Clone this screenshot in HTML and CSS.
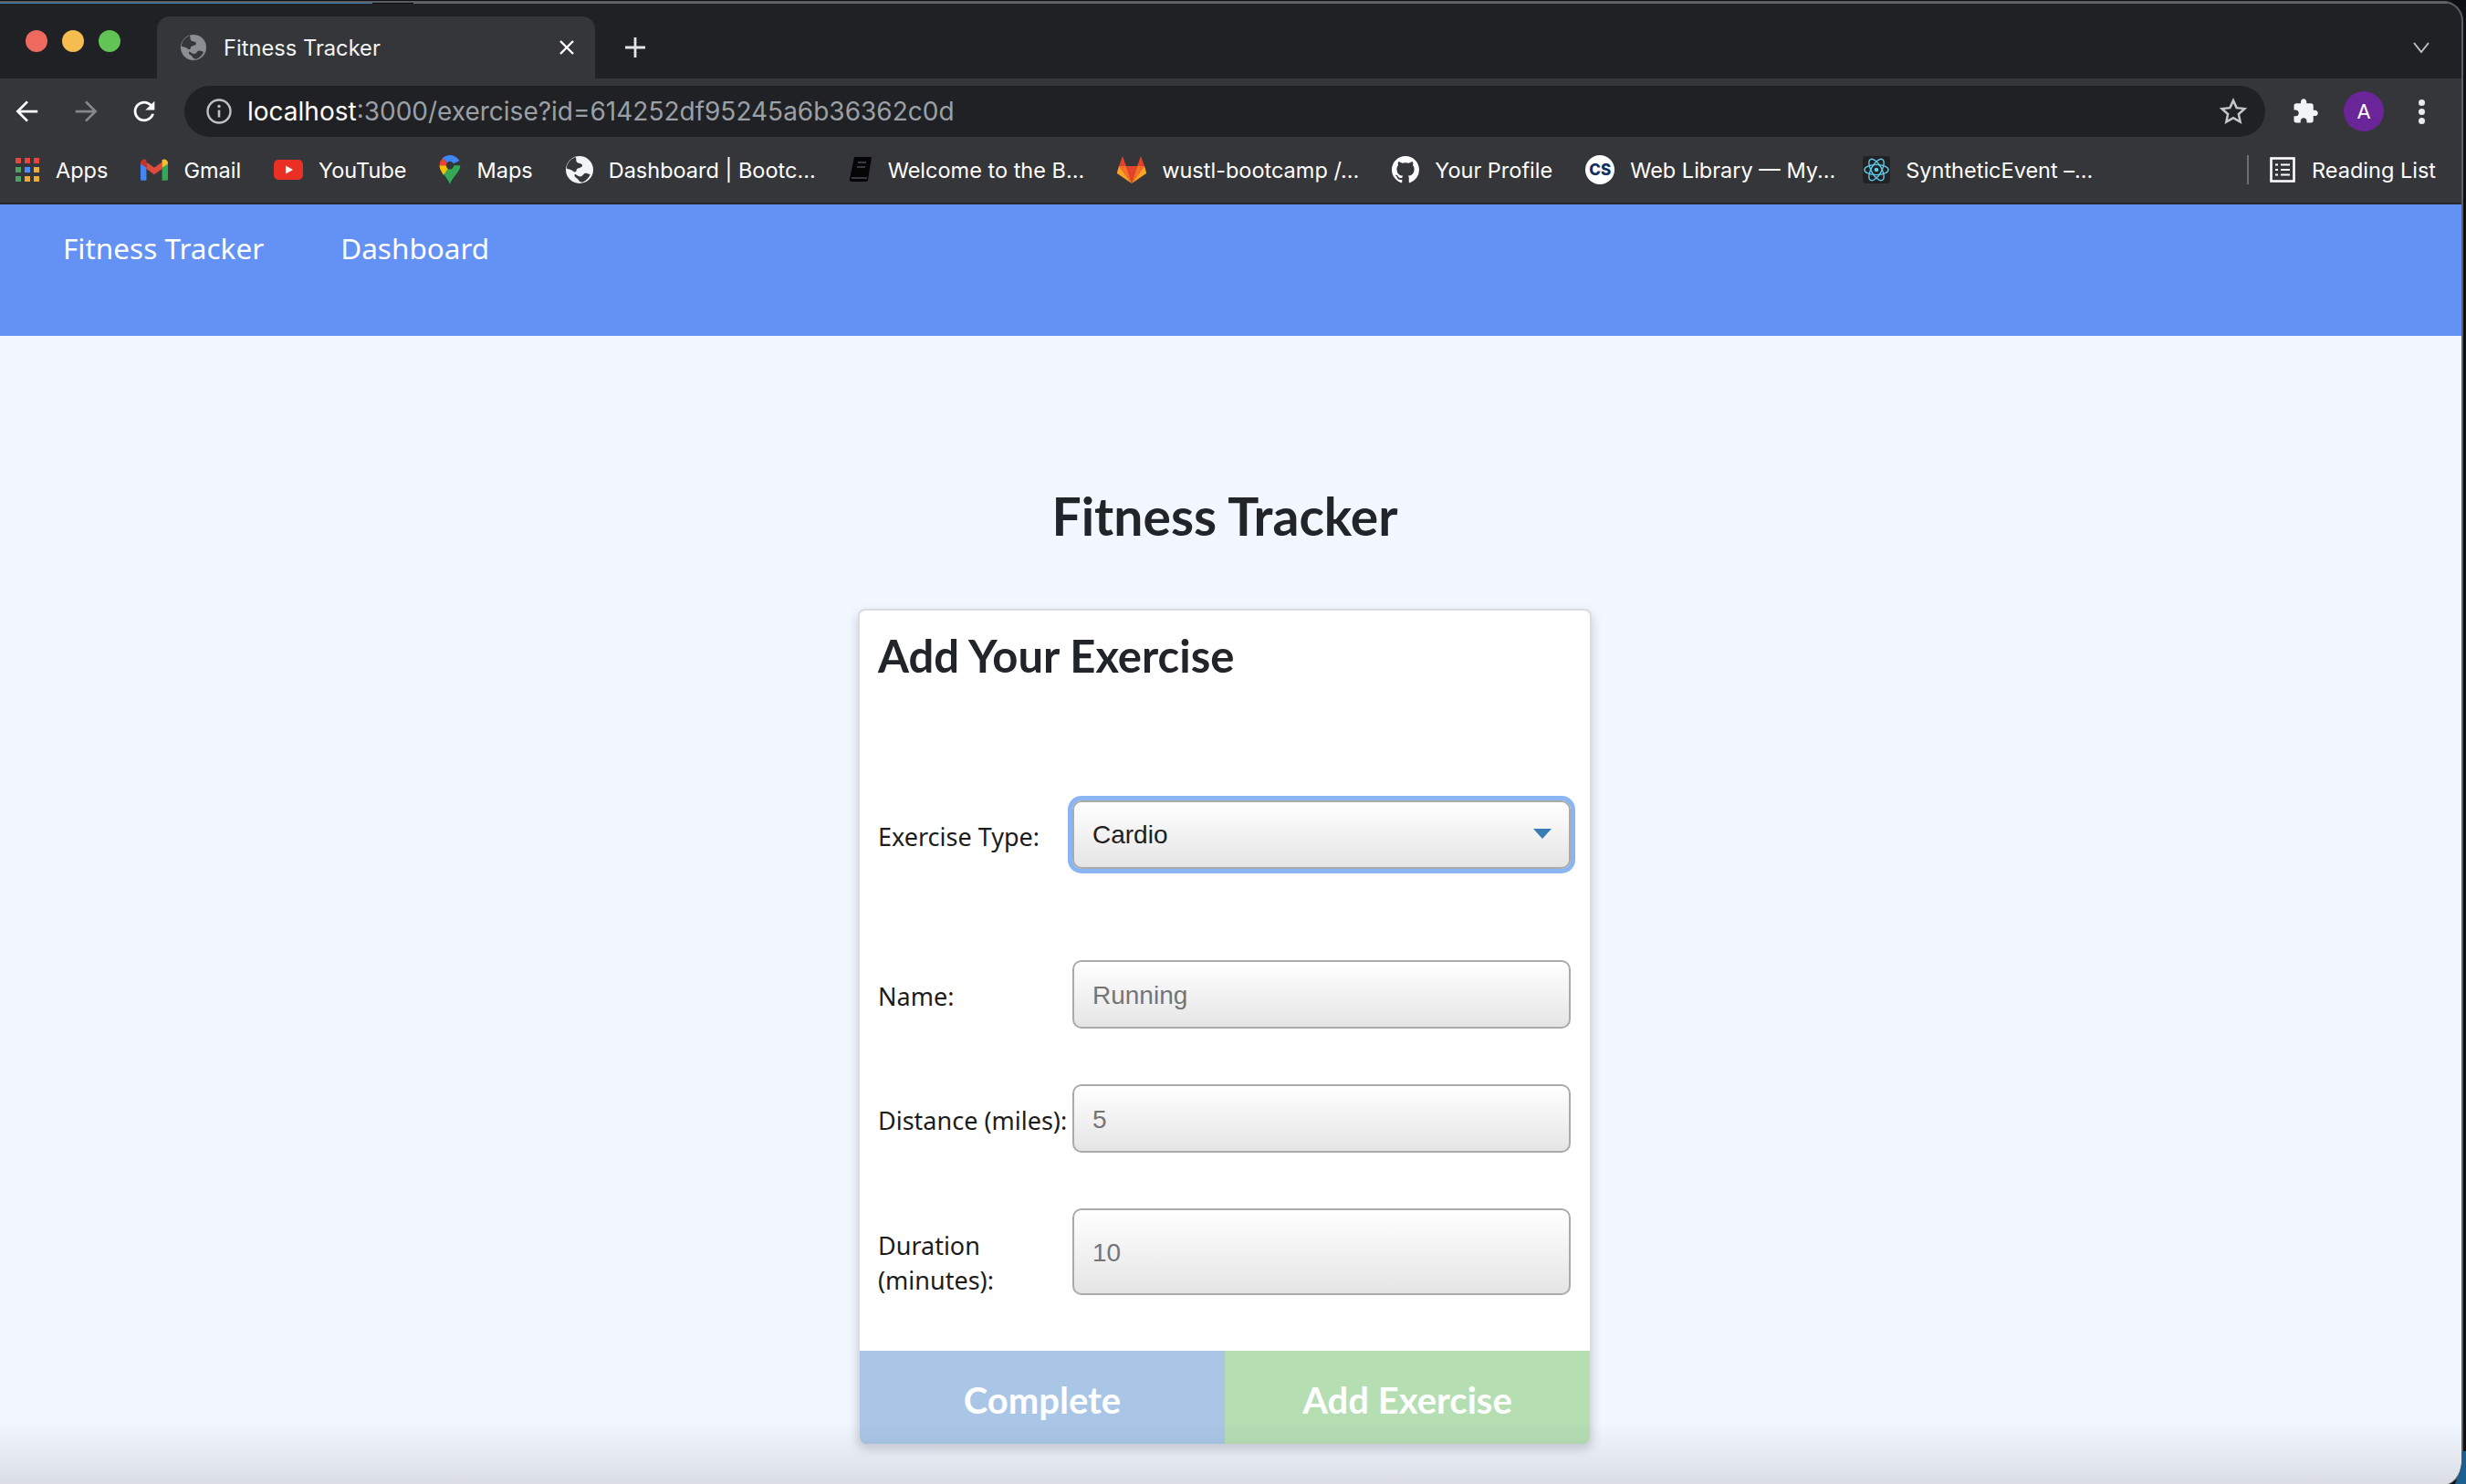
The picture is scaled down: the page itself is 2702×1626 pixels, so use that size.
FILE: index.html
```html
<!DOCTYPE html>
<html lang="en">
<head>
  <meta charset="UTF-8" />
  <title>Fitness Tracker</title>
  <link rel="stylesheet" href="styles.css">
</head>
<body>
  <svg class="defs" width="0" height="0">
    <symbol id="globe" viewBox="0 0 28 28">
      <circle cx="14" cy="14" r="14" fill="currentColor"/>
      <path fill="var(--land)" d="M9 1.500C4 3.500 1 8 .8 12.500c2.500 1.200 5 1 6.600 2.800 1.500 1.700 3.500 1 3.500-1 0-2.300 4-1.800 5.600-3.600 1.300-1.500-.5-3-2.500-3.200-2.500-.3-3.500-1.700-3.500-3.500 0-1 .6-1.800-1.500-3.500z"/>
      <path fill="var(--land)" d="M9 18.500c2 .3 3.500 2.500 5.500 2.500 3 0 3.500-3.500 5.500-3.500 1.500 0 3.200.5 5 1.500-1.500 3.500-4 6-7.500 7.500-2 .5-3.500-.2-4.500-2-1-2-3.500-2.500-4-4 0-.8-.2-2 0-2z"/>
    </symbol>
  </svg>

  <div class="title-edge"></div>
  <header class="browser">
    <div class="tabstrip">
      <div class="lights">
        <span class="light red"></span>
        <span class="light yellow"></span>
        <span class="light green"></span>
      </div>
      <div class="tab">
        <svg class="tab-globe"><use href="#globe"/></svg>
        <span class="tab-title">Fitness Tracker</span>
        <svg class="tab-close" viewBox="0 0 18 18"><path d="M2 2l14 14M16 2L2 16" stroke="#fff" stroke-width="2.400"/></svg>
      </div>
      <svg class="tab-new" viewBox="0 0 24 24"><path d="M12 1v22M1 12h22" stroke="#e3e4e6" stroke-width="2.800"/></svg>
      <svg class="tab-list" viewBox="0 0 18 18"><path d="M1 4l8 10 8-10" fill="none" stroke="#bdc1c6" stroke-width="2"/></svg>
    </div>

    <div class="toolbar">
      <svg class="tool back" viewBox="0 0 24 24"><path d="M21 12H4M12 3.500L3.500 12l8.500 8.500" fill="none" stroke="#fff" stroke-width="2.200"/></svg>
      <svg class="tool forward" viewBox="0 0 24 24"><path d="M3 12h17M12 3.500l8.500 8.500-8.500 8.500" fill="none" stroke="#85878a" stroke-width="2.200"/></svg>
      <svg class="tool reload" viewBox="0 0 24 24"><path fill="#fff" d="M17.650 6.350C16.200 4.900 14.210 4 12 4c-4.420 0-7.990 3.580-7.990 8s3.570 8 7.990 8c3.730 0 6.840-2.550 7.730-6h-2.080c-.820 2.330-3.040 4-5.650 4-3.310 0-6-2.690-6-6s2.690-6 6-6c1.660 0 3.140.690 4.220 1.780L13 11h7V4l-2.350 2.350z"/></svg>
      <div class="urlbar">
        <svg class="url-info" viewBox="0 0 28 28"><circle cx="14" cy="14" r="12.500" fill="none" stroke="#bdc1c6" stroke-width="2.400"/><path d="M14 12.500v8" stroke="#bdc1c6" stroke-width="2.600"/><circle cx="14" cy="8.500" r="1.700" fill="#bdc1c6"/></svg>
        <span class="url-host">localhost</span><span class="url-rest">:3000/exercise?id=614252df95245a6b36362c0d</span>
        <svg class="url-star" viewBox="0 0 24 24"><path d="M12 2.500l2.900 6.400 7 .8-5.200 4.700 1.400 6.900-6.100-3.500-6.100 3.500 1.400-6.900-5.200-4.700 7-.8z" fill="none" stroke="#c4c7ca" stroke-width="2"/></svg>
      </div>
      <svg class="tool puzzle" viewBox="0 0 24 24"><path fill="#f1f3f4" d="M20.500 11H19V7c0-1.100-.9-2-2-2h-4V3.500C13 2.120 11.880 1 10.500 1S8 2.120 8 3.500V5H4c-1.100 0-1.990.9-1.990 2v3.800H3.500c1.490 0 2.700 1.210 2.700 2.700s-1.210 2.700-2.700 2.700H2V20c0 1.100.9 2 2 2h3.800v-1.500c0-1.490 1.210-2.700 2.700-2.700 1.490 0 2.700 1.210 2.700 2.700V22H17c1.100 0 2-.9 2-2v-4h1.500c1.380 0 2.500-1.120 2.500-2.500S21.880 11 20.500 11z"/></svg>
      <span class="avatar">A</span>
      <span class="dots"><i></i><i></i><i></i></span>
    </div>

    <nav class="bookmarks">
      <a class="mark">
        <svg class="mark-icon apps" viewBox="0 0 28 28">
          <rect x="1" y="1" width="6" height="6" fill="#e8453c"/><rect x="11" y="1" width="6" height="6" fill="#e8453c"/><rect x="21" y="1" width="6" height="6" fill="#e8453c"/>
          <rect x="1" y="11" width="6" height="6" fill="#4ea261"/><rect x="11" y="11" width="6" height="6" fill="#4a8df6"/><rect x="21" y="11" width="6" height="6" fill="#edaa36"/>
          <rect x="1" y="21" width="6" height="6" fill="#4ea261"/><rect x="11" y="21" width="6" height="6" fill="#edaa36"/><rect x="21" y="21" width="6" height="6" fill="#edaa36"/>
        </svg>
        Apps
      </a>
      <a class="mark">
        <svg class="mark-icon" viewBox="0 0 28 22">
          <path fill="#4285f4" d="M0 3v17.500c0 .8.700 1.500 1.500 1.500H6V9z"/>
          <path fill="#34a853" d="M28 3v17.500c0 .8-.7 1.500-1.500 1.500H22V9z"/>
          <path fill="#e04b3c" d="M6 3l8 6 8-6v7l-8 6-8-6z"/>
          <path fill="#c5342a" d="M0 4c0-3 3.500-5 6-3v8L0 5z"/>
          <path fill="#f6bf2d" d="M28 4c0-3-3.500-5-6-3v8l6-4z"/>
        </svg>
        Gmail
      </a>
      <a class="mark">
        <svg class="mark-icon yt" viewBox="0 0 32 22"><rect width="32" height="22" rx="5" fill="#ea2f24"/><path d="M13 6.500l8 4.500-8 4.500z" fill="#fff"/></svg>
        YouTube
      </a>
      <a class="mark">
        <svg class="mark-icon pin" viewBox="0 0 22 31">
          <path fill="#34a853" d="M11 31C9 24 0 18 0 11h22c0 7-9 13-11 20z"/>
          <path fill="#fbbc04" d="M1.500 16.500C.5 15 0 13 0 11h7.500c0 1.500.8 2.700 1.500 3.300L4 21z"/>
          <path fill="#ea4335" d="M0 11c0-3 1-5.500 3-7.500L8.500 8c-.7.800-1 1.800-1 3z"/>
          <path fill="#4285f4" d="M3 3.500C5 1.300 8 0 11 0c4 0 8 2.300 10 6l-6.500 3c-.7-1.500-2-2.500-3.500-2.500-1 0-1.900.6-2.500 1.500z"/>
          <circle cx="11" cy="11" r="4" fill="#35363a"/>
        </svg>
        Maps
      </a>
      <a class="mark">
        <svg class="mark-icon globe"><use href="#globe"/></svg>
        Dashboard | Bootc...
      </a>
      <a class="mark">
        <svg class="mark-icon book" viewBox="0 0 26 30"><path fill="#050505" d="M6 1h19l-4 25c-.2 1-.8 2-2 2H3c-1.500 0-2.500-1-2-3z"/><path stroke="#3a3b3f" stroke-width="2" d="M10 7h9M9 12h9M3 24h17"/></svg>
        Welcome to the B...
      </a>
      <a class="mark">
        <svg class="mark-icon lab" viewBox="0 0 32 32">
          <path fill="#e24329" d="M16 31L10 12h12z"/>
          <path fill="#fc6d26" d="M16 31L10 12H2z"/>
          <path fill="#fc6d26" d="M16 31l6-19h8z"/>
          <path fill="#fca326" d="M2 12L0 19c-.2.500 0 1 .4 1.300L16 31z"/>
          <path fill="#fca326" d="M30 12l2 7c.2.500 0 1-.4 1.300L16 31z"/>
          <path fill="#e24329" d="M2 12L6 1l4 11zM30 12L26 1l-4 11z"/>
        </svg>
        wustl-bootcamp /...
      </a>
      <a class="mark">
        <svg class="mark-icon" viewBox="0 0 16 16"><path fill="#fff" d="M8 0C3.580 0 0 3.580 0 8c0 3.540 2.290 6.530 5.470 7.590.4.070.550-.170.550-.380 0-.190-.010-.820-.010-1.490-2.010.370-2.530-.490-2.690-.940-.090-.230-.480-.940-.820-1.130-.280-.150-.680-.520-.010-.530.630-.010 1.080.580 1.230.820.720 1.210 1.870.870 2.330.660.070-.520.280-.870.510-1.070-1.780-.200-3.640-.890-3.640-3.950 0-.870.310-1.590.820-2.150-.080-.200-.360-1.020.080-2.120 0 0 .670-.210 2.200.820.640-.180 1.320-.270 2-.270.680 0 1.360.090 2 .270 1.530-1.040 2.200-.820 2.200-.820.440 1.100.160 1.920.080 2.120.510.560.820 1.270.820 2.150 0 3.070-1.870 3.750-3.650 3.950.290.250.540.730.540 1.480 0 1.070-.010 1.930-.010 2.200 0 .210.150.460.550.380A8.013 8.013 0 0016 8c0-4.420-3.580-8-8-8z"/></svg>
        Your Profile
      </a>
      <a class="mark mark-narrow">
        <span class="mark-icon cs">CS</span>
        Web Library — My...
      </a>
      <a class="mark">
        <svg class="mark-icon" viewBox="0 0 32 32">
          <rect width="32" height="32" rx="4" fill="#202226"/>
          <g fill="none" stroke="#61c8e6" stroke-width="1.500">
            <ellipse cx="16" cy="16" rx="14" ry="6"/>
            <ellipse cx="16" cy="16" rx="14" ry="6" transform="rotate(60 16 16)"/>
            <ellipse cx="16" cy="16" rx="14" ry="6" transform="rotate(120 16 16)"/>
          </g>
          <circle cx="16" cy="16" r="2.500" fill="#61c8e6"/>
        </svg>
        SyntheticEvent –...
      </a>
      <span class="mark-sep"></span>
      <a class="mark">
        <svg class="mark-icon list" viewBox="0 0 28 28">
          <rect x="1.500" y="1.500" width="25" height="25" fill="none" stroke="#fff" stroke-width="2.600"/>
          <path stroke="#fff" stroke-width="2.200" d="M6 8.500h3M12 8.500h10M6 14h3M12 14h10M6 19.500h3M12 19.500h10"/>
        </svg>
        Reading List
      </a>
    </nav>
  </header>

  <div class="app-nav">
    <a class="app-link">Fitness Tracker</a>
    <a class="app-link">Dashboard</a>
  </div>

  <main class="page">
    <h1 class="page-title">Fitness Tracker</h1>

    <section class="card">
      <h2 class="card-title">Add Your Exercise</h2>

      <form class="card-form">
        <div class="row row-type">
          <label class="row-label" for="type">Exercise Type:</label>
          <div class="select-wrap">
            <select id="type" class="field field-focus">
              <option>Cardio</option>
            </select>
          </div>
        </div>
        <div class="row row-name">
          <label class="row-label" for="name">Name:</label>
          <input id="name" class="field" type="text" placeholder="Running">
        </div>
        <div class="row">
          <label class="row-label" for="distance">Distance (miles):</label>
          <input id="distance" class="field" type="text" placeholder="5">
        </div>
        <div class="row row-duration">
          <label class="row-label" for="duration">Duration (minutes):</label>
          <input id="duration" class="field field-tall" type="text" placeholder="10">
        </div>
      </form>

      <div class="card-actions">
        <button class="action action-complete" type="button">Complete</button>
        <button class="action action-add" type="button">Add Exercise</button>
      </div>
    </section>
  </main>

  <div class="dock-shade"></div>
  <div class="window-edge"></div>
  <div class="desk-corner"></div>
</body>
</html>
```

FILE: styles.css
```css
* {
  box-sizing: border-box;
}

html, body {
  margin: 0;
  height: 1626px;
  overflow: hidden;
}

body {
  position: relative;
  display: flex;
  flex-direction: column;
  background-color: #f3f7ff;
  font-family: "Liberation Sans", Arial, sans-serif;
  color: #212529;
}

.defs {
  position: absolute;
}

/* browser chrome */
.title-edge {
  flex: none;
  height: 4px;
  background: linear-gradient(90deg, #3f7fb3 0 408px, #0c0f14 408px 453px, #6d6e70 453px);
}

.browser {
  flex: none;
  height: 220px;
  background-color: #35363a;
  border-bottom: 2px solid #26272a;
  color: #fff;
  font-family: Inter, sans-serif;
}

.tabstrip {
  height: 82px;
  display: flex;
  align-items: flex-end;
  background-color: #202124;
  padding-right: 40px;
}

.lights {
  display: flex;
  gap: 16px;
  width: 172px;
  height: 82px;
  padding: 29px 0 0 28px;
}

.light {
  width: 24px;
  height: 24px;
  border-radius: 50%;
}

.red { background-color: #ee6a5f; }
.yellow { background-color: #f5bd4f; }
.green { background-color: #61c454; }

.tab {
  --land: #35363a;
  width: 480px;
  height: 68px;
  display: flex;
  align-items: center;
  padding: 0 22px 0 26px;
  background-color: #35363a;
  border-radius: 14px 14px 0 0;
  color: #8b8e93;
}

.tab-globe {
  width: 28px;
  height: 28px;
  flex: none;
}

.tab-title {
  margin-left: 19px;
  font-size: 23.7px;
  color: #f1f3f4;
  flex: 1;
}

.tab-close {
  width: 18px;
  height: 18px;
}

.tab-new {
  width: 24px;
  height: 24px;
  margin: 0 0 22px 32px;
}

.tab-list {
  width: 18px;
  height: 18px;
  margin: 0 0 25px auto;
}

.toolbar {
  height: 64px;
  display: flex;
  align-items: center;
  padding-top: 8px;
}

.tool {
  flex: none;
  width: 30px;
  height: 30px;
}

.back { margin-left: 15px; }
.forward { margin-left: 34px; }

.reload {
  width: 34px;
  height: 34px;
  margin-left: 32px;
}

.urlbar {
  flex: none;
  width: 2280px;
  height: 56px;
  margin-left: 27px;
  display: flex;
  align-items: center;
  padding: 0 20px 0 24px;
  background-color: #202124;
  border-radius: 28px;
  font-size: 28px;
}

.url-info {
  width: 28px;
  height: 28px;
  margin-right: 17px;
}

.url-host { color: #fff; }
.url-rest { color: #9aa0a6; }

.url-star {
  width: 30px;
  height: 30px;
  margin-left: auto;
}

.puzzle { margin-left: 29px; }

.avatar {
  flex: none;
  width: 44px;
  height: 44px;
  margin-left: 27px;
  border-radius: 50%;
  background-color: #6a2598;
  text-align: center;
  font-size: 22px;
  line-height: 44px;
}

.dots {
  display: flex;
  flex-direction: column;
  gap: 3px;
  margin-left: 38px;
}

.dots i {
  width: 7px;
  height: 7px;
  border-radius: 50%;
  background-color: #e8eaed;
}

.bookmarks {
  height: 72px;
  display: flex;
  align-items: center;
  padding-left: 16px;
  font-size: 23.5px;
  white-space: nowrap;
}

.mark {
  display: flex;
  align-items: center;
  gap: 17px;
  margin-right: 36px;
}

.mark-narrow {
  margin-right: 30px;
}

.mark-icon {
  flex: none;
  width: 30px;
  height: 30px;
}

.apps { width: 28px; height: 28px; }
.yt { width: 32px; height: 24px; }
.pin { width: 24px; height: 32px; }
.globe { --land: #35363a; color: #f1f3f4; }
.book { width: 26px; height: 30px; }
.lab { width: 32px; height: 32px; }
.list { width: 28px; height: 28px; }

.cs {
  width: 32px;
  height: 32px;
  border-radius: 50%;
  background-color: #fff;
  color: #12305f;
  font-size: 17px;
  font-weight: 800;
  line-height: 32px;
  text-align: center;
}

.mark-sep {
  width: 2px;
  height: 32px;
  margin: 0 23px 0 auto;
  background-color: #6d6e71;
}

.mark:last-child {
  gap: 18px;
  margin-right: 33px;
}

/* app nav */
.app-nav {
  flex: none;
  height: 144px;
  display: flex;
  gap: 84px;
  padding: 26px 0 0 69px;
  background-color: #6391f4;
  color: #fff;
  font-family: "Noto Sans", sans-serif;
  font-size: 31.5px;
}

/* page */
.page {
  flex: 1;
  display: flex;
  flex-direction: column;
  align-items: center;
  padding-right: 18px;
}

.page-title {
  margin: 162px 0 0;
  height: 137px;
  font-family: Lato, sans-serif;
  font-size: 57px;
  font-weight: 700;
  line-height: 70px;
}

.card {
  flex: none;
  width: 804px;
  height: 915px;
  display: flex;
  flex-direction: column;
  background-color: #fff;
  border: 2px solid #dadcdf;
  border-bottom: none;
  border-radius: 8px;
  box-shadow: 0 5px 12px rgba(30, 40, 60, 0.22);
  overflow: hidden;
}

.card-title {
  flex: none;
  margin: 0;
  height: 208px;
  padding: 19px 0 0 20px;
  font-family: Lato, sans-serif;
  font-size: 49px;
  font-weight: 700;
  line-height: 60px;
}

.card-form {
  flex: 1;
  padding: 0 21px 0 20px;
}

.row {
  display: flex;
  align-items: center;
  margin-bottom: 61px;
}

.row-type {
  margin-bottom: 100px;
}

.row-label {
  flex: none;
  width: 213px;
  padding-top: 4px;
  padding-right: 30px;
  font-family: "Noto Sans", sans-serif;
  font-size: 27px;
  line-height: 38px;
  color: #1c1c1c;
}

.row:nth-child(3) .row-label {
  padding-right: 0;
  white-space: nowrap;
}

.row-duration .row-label {
  align-self: flex-start;
  height: 95px;
  padding-top: 22px;
}

.select-wrap {
  position: relative;
  flex: 1;
  display: flex;
}

.select-wrap::after {
  content: "";
  position: absolute;
  top: 31px;
  right: 21px;
  border-style: solid;
  border-width: 11px 10px 0;
  border-color: #3a7db5 transparent transparent;
  pointer-events: none;
}

.field {
  flex: 1;
  min-width: 0;
  height: 75px;
  padding: 2px 20px 0;
  background: linear-gradient(#ffffff, #e5e5e5);
  border: 2px solid #aaaaaa;
  border-radius: 10px;
  font-family: "Liberation Sans", Arial, sans-serif;
  font-size: 28px;
  color: #212121;
  outline: none;
  appearance: none;
}

select.field {
  padding-top: 0;
}

.field::placeholder {
  color: #757575;
  opacity: 1;
}

.field-focus {
  box-shadow: 0 0 0 5px #8ab4f4;
}

.field-tall {
  height: 95px;
}

.card-actions {
  flex: none;
  height: 102px;
  display: flex;
}

.action {
  flex: 1;
  padding: 5px 0 0;
  border: none;
  color: #fff;
  font-family: Lato, sans-serif;
  font-size: 40px;
  font-weight: 700;
}

.action-complete { background-color: #a9c6e7; }
.action-add { background-color: #b5deb3; }

/* overlays: dock shadow at the bottom, rounded window frame, desktop corner */
.dock-shade {
  position: absolute;
  left: 0;
  right: 0;
  bottom: 0;
  height: 70px;
  background: linear-gradient(rgba(90, 90, 90, 0), rgba(90, 90, 90, 0.16));
  pointer-events: none;
}

.window-edge {
  position: absolute;
  top: 1px;
  left: -40px;
  right: 3px;
  bottom: -2px;
  border: 2px solid #5b5d60;
  border-bottom: none;
  border-left: none;
  border-radius: 0 22px 26px 0;
  box-shadow: 0 0 0 40px #0d0f14;
  pointer-events: none;
}

.desk-corner {
  position: absolute;
  right: 0;
  bottom: 0;
  width: 12px;
  height: 36px;
  background-color: #1d5f8f;
  clip-path: polygon(100% 0, 100% 100%, 0 100%, 45% 60%, 65% 30%, 65% 0);
}
```
